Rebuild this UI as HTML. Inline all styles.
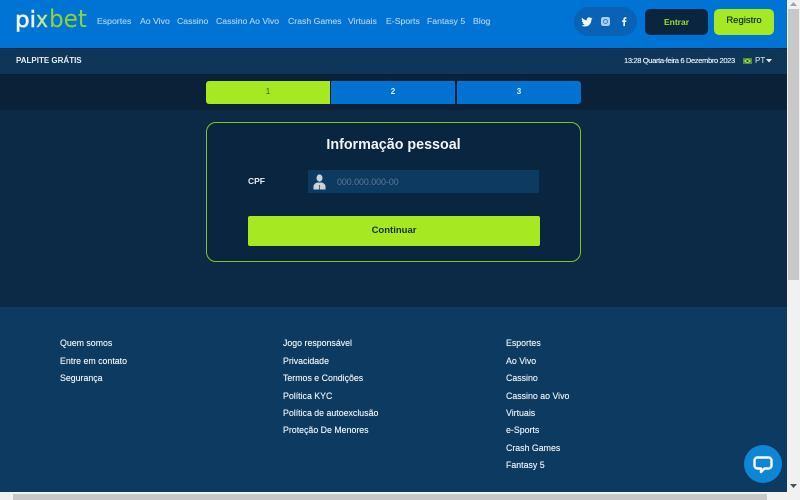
<!DOCTYPE html>
<html lang="pt"><head><meta charset="utf-8"><title>Pixbet</title>
<style>
html,body{margin:0;padding:0;width:800px;height:500px;overflow:hidden;background:#0c2945;font-family:"Liberation Sans",sans-serif}
#p{position:relative;width:800px;height:500px;overflow:hidden;filter:blur(.3px)}
.b{position:absolute;display:block}
.t{position:absolute;white-space:nowrap;line-height:12px;font-size:9px}
.n{color:#a9cdf0;top:15px;font-size:8.700px;text-shadow:0 0 .4px #a9cdf0}
.f{color:#e6edf4;font-size:8.800px;text-shadow:0 0 .4px #e6edf4}
svg{position:absolute;display:block}
</style></head><body><div id="p">
<div class="b" style="left:0;top:0;width:787px;height:48px;background:#0074d4"></div>
<div class="b" style="left:0;top:48px;width:787px;height:26px;background:#0e3659;border-top:1px solid #0a2a48;box-sizing:border-box"></div>
<div class="b" style="left:0;top:74px;width:787px;height:36px;background:#0a2138"></div>
<div class="b" style="left:0;top:110px;width:787px;height:197px;background:#0c2945"></div>
<div class="b" style="left:0;top:306px;width:787px;height:186px;background:#0d3a60;border-top:1px solid #0a2a48;box-sizing:border-box"></div>

<svg style="left:12px;top:6px" width="80" height="30" viewBox="0 0 80 30"><text x="3" y="21" font-family="DejaVu Sans,sans-serif" font-size="22" fill="#f2f6fa" stroke="#f2f6fa" stroke-width=".6" textLength="21" lengthAdjust="spacingAndGlyphs">pi</text><text x="24" y="21" font-family="DejaVu Sans,sans-serif" font-size="22" fill="#c4e88a" stroke="#c4e88a" stroke-width=".4" textLength="12" lengthAdjust="spacingAndGlyphs">x</text><text x="37" y="21" font-family="DejaVu Sans,sans-serif" font-size="24" fill="#8fd236" textLength="38" lengthAdjust="spacingAndGlyphs">bet</text></svg>

<span class="t n" style="left:97px">Esportes</span>
<span class="t n" style="left:140px">Ao Vivo</span>
<span class="t n" style="left:177px">Cassino</span>
<span class="t n" style="left:216px">Cassino Ao Vivo</span>
<span class="t n" style="left:288px">Crash Games</span>
<span class="t n" style="left:348px">Virtuais</span>
<span class="t n" style="left:386px">E-Sports</span>
<span class="t n" style="left:427px">Fantasy 5</span>
<span class="t n" style="left:473px">Blog</span>

<div class="b" style="left:574px;top:7px;width:63px;height:29px;border-radius:15px;background:#0a62b6"></div>
<svg style="left:581px;top:16px" width="12" height="12" viewBox="0 0 24 24"><path fill="#f2f7fb" d="M23 4.900c-.8.400-1.700.600-2.600.700.900-.6 1.600-1.400 2-2.500-.9.500-1.800.900-2.900 1.100A4.600 4.600 0 0 0 11.600 8.400 13 13 0 0 1 2.200 3.600a4.600 4.600 0 0 0 1.400 6.100c-.7 0-1.400-.2-2-.6 0 2.300 1.600 4.200 3.700 4.600-.7.200-1.400.2-2.100.1.600 1.800 2.300 3.200 4.300 3.200A9.200 9.200 0 0 1 .7 18.900 13 13 0 0 0 7.700 21c8.500 0 13.300-7.200 13-13.600.9-.7 1.700-1.500 2.300-2.500z"/></svg>
<svg style="left:601px;top:17px" width="9" height="9" viewBox="0 0 9 9"><rect width="9" height="9" rx="2.200" fill="#a9cdf0"/><circle cx="4.500" cy="4.500" r="2" fill="none" stroke="#2d80c8" stroke-width=".9"/></svg>
<svg style="left:621px;top:16px" width="7" height="11" viewBox="0 0 9 12"><path fill="#eef5fb" d="M3 12V6.600H1.400V4.600H3V3.200C3 1.500 4 .6 5.500.6H7v2H6c-.7 0-.9.300-.9.900v1.100h1.900l-.3 2H5.100V12z"/></svg>

<div class="b" style="left:645px;top:9px;width:63px;height:26px;border-radius:5px;background:#0a2540"></div>
<span class="t" style="left:645px;top:16px;width:63px;text-align:center;color:#9fe028;font-weight:bold;font-size:8.500px">Entrar</span>
<div class="b" style="left:714px;top:9px;width:60px;height:26px;border-radius:5px;background:#a6e822"></div>
<span class="t" style="left:714px;top:15px;width:60px;text-align:center;color:#14321c;font-size:9.500px;text-shadow:0 0 .4px #14321c">Registro</span>

<span class="t" style="left:16px;top:55px;color:#e6edf4;font-weight:bold;font-size:8px">PALPITE GRÁTIS</span>
<span class="t" style="left:624px;top:55px;color:#e6edf4;font-size:7.600px;letter-spacing:-.39px;text-shadow:0 0 .4px #e6edf4">13:28 Quarta-feira 6 Dezembro 2023</span>
<svg style="left:743px;top:58px" width="9" height="6" viewBox="0 0 9 6"><rect width="9" height="6" fill="#3c9a2e"/><path d="M4.500.7 8 3 4.500 5.300 1 3z" fill="#e8d834"/><circle cx="4.500" cy="3" r="1.200" fill="#1f4a8a"/></svg>
<span class="t" style="left:755px;top:55px;color:#e6edf4;font-size:8px">PT</span>
<svg style="left:766px;top:59px" width="6" height="4" viewBox="0 0 6 4"><path d="M0 0h6L3 3.500z" fill="#e6edf4"/></svg>

<div class="b" style="left:206px;top:81px;width:124px;height:23px;background:#a6e822;border-radius:3px 0 0 3px"></div>
<div class="b" style="left:331px;top:81px;width:124px;height:23px;background:#0272d2"></div>
<div class="b" style="left:457px;top:81px;width:124px;height:23px;background:#0272d2;border-radius:0 3px 3px 0"></div>
<span class="t" style="left:206px;top:86px;width:124px;text-align:center;color:#2c5a20;font-size:8px">1</span>
<span class="t" style="left:331px;top:86px;width:124px;text-align:center;color:#e6f0fa;font-size:8px;font-weight:bold">2</span>
<span class="t" style="left:457px;top:86px;width:124px;text-align:center;color:#e6f0fa;font-size:8px;font-weight:bold">3</span>

<div class="b" style="left:206px;top:122px;width:375px;height:140px;box-sizing:border-box;border:1px solid #86c02a;border-radius:10px;background:#0a2540"></div>
<span class="t" style="left:206px;top:137px;width:375px;text-align:center;color:#f2f5f8;font-weight:bold;font-size:14.300px;line-height:17px">Informação pessoal</span>
<span class="t" style="left:248px;top:175px;color:#e6edf4;font-weight:bold;font-size:8.500px">CPF</span>
<div class="b" style="left:308px;top:170px;width:231px;height:23px;background:#0d3a60;border-radius:1px"></div>
<svg style="left:313px;top:174px" width="13" height="16" viewBox="0 0 13 16"><ellipse cx="6.500" cy="4" rx="3" ry="3.600" fill="#c8d2da"/><path d="M.5 15.500V12.500c0-2 2-3.700 4-4h4c2 .3 4 2 4 4v3z" fill="#c8d2da"/><path d="M6.500 11v4.500" stroke="#0d3a60" stroke-width=".7"/></svg>
<span class="t" style="left:337px;top:176px;color:#5d7a96;font-size:8.800px">000.000.000-00</span>
<div class="b" style="left:248px;top:216px;width:292px;height:30px;background:#a6e822;border-radius:2px"></div>
<span class="t" style="left:248px;top:224px;width:292px;text-align:center;color:#14321c;font-weight:bold;font-size:9.500px;line-height:13px">Continuar</span>

<span class="t f" style="left:60px;top:337px">Quem somos</span>
<span class="t f" style="left:60px;top:355px">Entre em contato</span>
<span class="t f" style="left:60px;top:372px">Segurança</span>
<span class="t f" style="left:283px;top:337px">Jogo responsável</span>
<span class="t f" style="left:283px;top:355px">Privacidade</span>
<span class="t f" style="left:283px;top:372px">Termos e Condições</span>
<span class="t f" style="left:283px;top:390px">Política KYC</span>
<span class="t f" style="left:283px;top:407px">Política de autoexclusão</span>
<span class="t f" style="left:283px;top:424px">Proteção De Menores</span>
<span class="t f" style="left:506px;top:337px">Esportes</span>
<span class="t f" style="left:506px;top:355px">Ao Vivo</span>
<span class="t f" style="left:506px;top:372px">Cassino</span>
<span class="t f" style="left:506px;top:390px">Cassino ao Vivo</span>
<span class="t f" style="left:506px;top:407px">Virtuais</span>
<span class="t f" style="left:506px;top:424px">e-Sports</span>
<span class="t f" style="left:506px;top:442px">Crash Games</span>
<span class="t f" style="left:506px;top:459px">Fantasy 5</span>

<div class="b" style="left:744px;top:445px;width:38px;height:38px;border-radius:50%;background:#0f85d6"></div>
<svg style="left:753px;top:456px" width="20" height="18" viewBox="0 0 20 18"><path fill="none" stroke="#fff" stroke-width="2.400" stroke-linejoin="round" d="M4.500 1.500h11a3 3 0 0 1 3 3v5a3 3 0 0 1-3 3h-4L8 16v-3.500H4.500a3 3 0 0 1-3-3v-5a3 3 0 0 1 3-3z"/></svg>

<div class="b" style="left:787px;top:0;width:13px;height:500px;background:#f1f1f1"></div>
<div class="b" style="left:788px;top:9px;width:11px;height:271px;background:#c8c8c8"></div>
<svg style="left:790px;top:2px" width="7" height="5" viewBox="0 0 7 5"><path d="M3.500 0 7 4H0z" fill="#a3a3a3"/></svg>
<svg style="left:790px;top:484px" width="7" height="5" viewBox="0 0 7 5"><path d="M3.500 4 7 0H0z" fill="#505050"/></svg>
<div class="b" style="left:0;top:492px;width:787px;height:8px;background:#f1f1f1"></div>
<div class="b" style="left:13px;top:494px;width:754px;height:6px;background:#c8c8c8"></div>
</div></body></html>
